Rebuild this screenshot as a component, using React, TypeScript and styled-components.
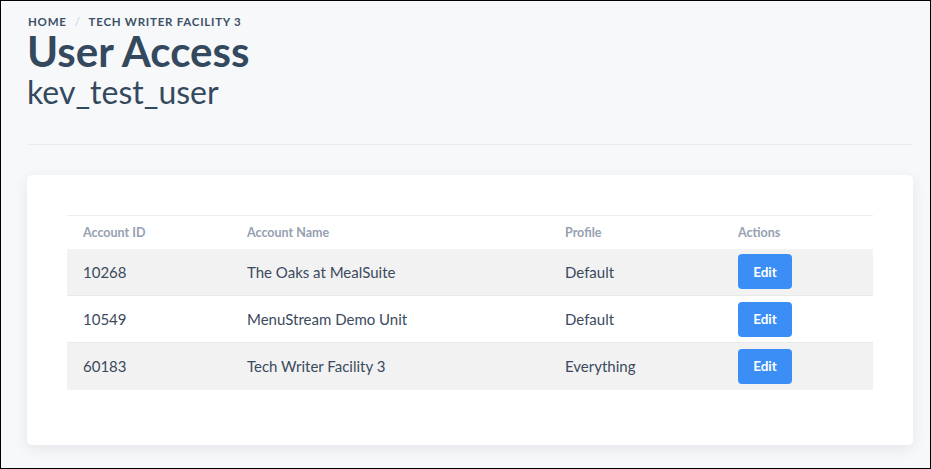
import React from 'react';
import styled, { createGlobalStyle } from 'styled-components';

const GlobalStyle = createGlobalStyle`
  html, body {
    margin: 0;
    padding: 0;
    background: #f7f8fa;
  }
  body {
    font-family: Lato, "Noto Sans", sans-serif;
    color: #35495e;
  }
  * {
    box-sizing: border-box;
  }
`;

const Page = styled.div`
  width: 931px;
  height: 469px;
  border: 1px solid #000;
  background: #f7f8fa;
  padding: 13px 17px 0 26px;
  overflow: hidden;
`;

const Breadcrumb = styled.nav`
  display: flex;
  align-items: center;
  gap: 8px;
  padding-left: 1px;
  font-size: 11.5px;
  line-height: 15px;
  font-weight: 700;
  letter-spacing: 0.75px;
  text-transform: uppercase;
  color: #3d5066;
`;

const Separator = styled.span`
  color: #c7ced8;
  font-weight: 400;
`;

const Title = styled.h1`
  margin: 0;
  font-size: 42px;
  line-height: 44px;
  font-weight: 700;
  color: #34495e;
`;

const Subtitle = styled.h2`
  margin: 0;
  font-size: 32px;
  line-height: 38px;
  font-weight: 400;
  color: #34495e;
`;

const Divider = styled.hr`
  margin: 33px 0 30px 1px;
  border: 0;
  border-top: 1px solid #e8eaee;
`;

const Card = styled.section`
  background: #fff;
  border-radius: 5px;
  box-shadow: 0 4px 14px rgba(40, 50, 70, 0.09);
  padding: 40px 40px 55px;
`;

const Table = styled.table`
  width: 100%;
  border-collapse: collapse;
  font-size: 15px;
  color: #3b4a5e;
`;

const HeadCell = styled.th<{ $width?: number; $flush?: boolean }>`
  text-align: left;
  font-weight: 700;
  font-size: 12.5px;
  color: #95a0b0;
  height: 33px;
  padding: 0 ${(p) => (p.$flush ? '0' : '16px')};
  width: ${(p) => (p.$width ? `${p.$width}px` : 'auto')};
  border-top: 1px solid #eceef1;
`;

const Row = styled.tr<{ $striped: boolean }>`
  background: ${(p) => (p.$striped ? '#f2f2f2' : '#fff')};
  & + & {
    border-top: 1px solid #e9e9e9;
  }
`;

const Cell = styled.td`
  height: 47px;
  padding: 0 16px;
`;

const ActionCell = styled(Cell)`
  padding: 0;
`;

const EditButton = styled.button`
  width: 54px;
  height: 35px;
  border: 0;
  border-radius: 4px;
  background: #3a8ef6;
  color: #fff;
  font-family: inherit;
  font-weight: 700;
  font-size: 13.5px;
  cursor: pointer;
`;

const rows = [
  { id: '10268', name: 'The Oaks at MealSuite', profile: 'Default' },
  { id: '10549', name: 'MenuStream Demo Unit', profile: 'Default' },
  { id: '60183', name: 'Tech Writer Facility 3', profile: 'Everything' },
];

export default function App() {
  return (
    <>
      <GlobalStyle />
      <Page>
        <Breadcrumb>
          <span>Home</span>
          <Separator>/</Separator>
          <span>Tech Writer Facility 3</span>
        </Breadcrumb>
        <Title>User Access</Title>
        <Subtitle>kev_test_user</Subtitle>
        <Divider />
        <Card>
          <Table>
            <thead>
              <tr>
                <HeadCell $width={164}>Account ID</HeadCell>
                <HeadCell $width={318}>Account Name</HeadCell>
                <HeadCell $width={189}>Profile</HeadCell>
                <HeadCell $flush>Actions</HeadCell>
              </tr>
            </thead>
            <tbody>
              {rows.map((r, i) => (
                <Row key={r.id} $striped={i % 2 === 0}>
                  <Cell>{r.id}</Cell>
                  <Cell>{r.name}</Cell>
                  <Cell>{r.profile}</Cell>
                  <ActionCell>
                    <EditButton>Edit</EditButton>
                  </ActionCell>
                </Row>
              ))}
            </tbody>
          </Table>
        </Card>
      </Page>
    </>
  );
}
